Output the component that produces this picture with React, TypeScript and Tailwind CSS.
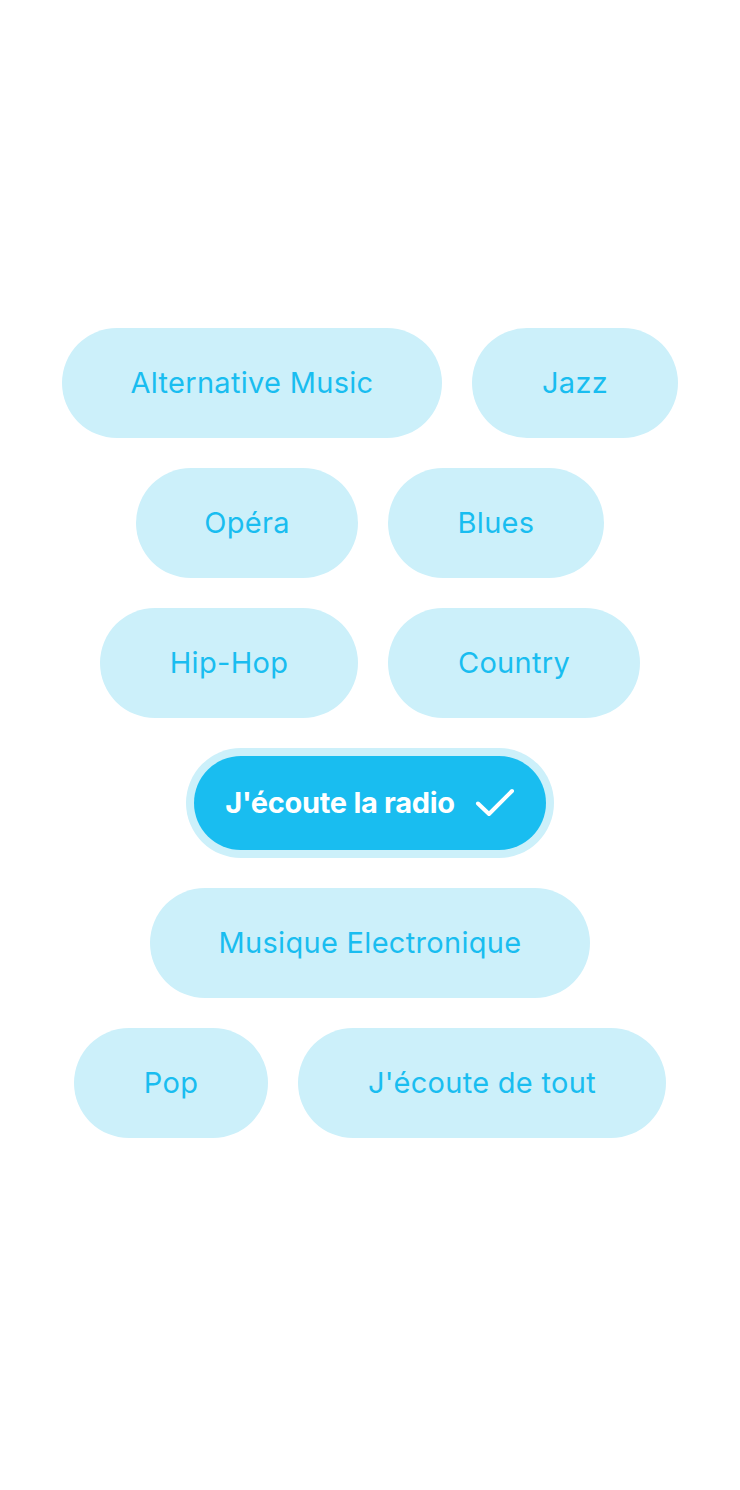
import React, { useState } from 'react';

type Genre = { label: string; width: string };

// rows are laid out as in the mock, one flex row each, centred
const rows: Genre[][] = [
  [
    { label: 'Alternative Music', width: 'w-[380px]' },
    { label: 'Jazz', width: 'w-[206px]' },
  ],
  [
    { label: 'Opéra', width: 'w-[222px]' },
    { label: 'Blues', width: 'w-[216px]' },
  ],
  [
    { label: 'Hip-Hop', width: 'w-[258px]' },
    { label: 'Country', width: 'w-[252px]' },
  ],
  [{ label: "J'écoute la radio", width: 'w-[368px]' }],
  [{ label: 'Musique Electronique', width: 'w-[440px]' }],
  [
    { label: 'Pop', width: 'w-[194px]' },
    { label: "J'écoute de tout", width: 'w-[368px]' },
  ],
];

function Check() {
  return (
    <svg width="40" height="32" viewBox="0 0 40 32" fill="none" className="ml-[20px]">
      <path
        d="M3 16.5 L14 27 L37 4"
        stroke="white"
        strokeWidth="4"
        strokeLinecap="round"
        strokeLinejoin="round"
      />
    </svg>
  );
}

export default function App() {
  const [selected, setSelected] = useState<string>("J'écoute la radio");

  return (
    <div
      className="w-[740px] h-[1490px] bg-white pt-[328px] flex flex-col gap-[30px]"
      style={{ fontFamily: 'Inter, "Noto Sans", sans-serif' }}
    >
      {rows.map((row, i) => (
        <div key={i} className="flex justify-center gap-[30px]">
          {row.map(g =>
            g.label === selected ? (
              <button
                key={g.label}
                onClick={() => setSelected('')}
                className={`${g.width} h-[110px] rounded-full bg-[#ccf0fa] p-[8px]`}
              >
                <span className="flex h-full w-full items-center justify-center rounded-full bg-[#19bdf0] text-white text-[29px] font-bold tracking-[-0.3px]">
                  {g.label}
                  <Check />
                </span>
              </button>
            ) : (
              <button
                key={g.label}
                onClick={() => setSelected(g.label)}
                className={`${g.width} h-[110px] rounded-full bg-[#ccf0fa] text-[#19bdf0] text-[29px] tracking-[0.3px] flex items-center justify-center`}
              >
                {g.label}
              </button>
            )
          )}
        </div>
      ))}
    </div>
  );
}
